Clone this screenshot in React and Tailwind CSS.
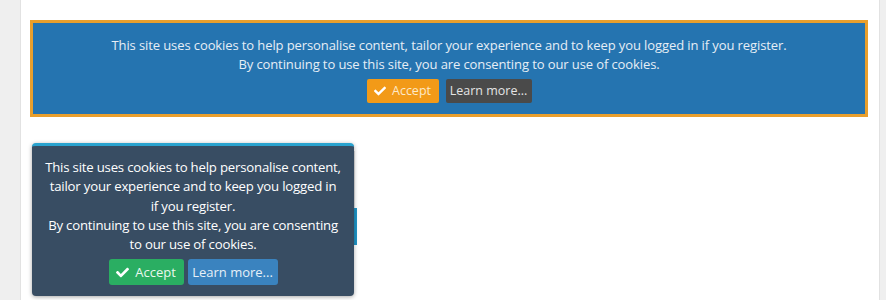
import React from "react";
import { FaCheck } from "react-icons/fa";

export default function App() {
  return (
    <div
      className="flex w-[886px] h-[300px] overflow-hidden bg-white"
      style={{ fontFamily: '"Open Sans", "Noto Sans", sans-serif' }}
    >
      <div className="w-[21px] shrink-0 bg-[#efefef] border-r border-[#e2e2e2]" />
      <div className="flex-1 relative pl-[9px] pt-[20px]">
        <div className="w-[838px] h-[97px] border-[3px] border-[#e99f2c] bg-[#2574b0] flex flex-col items-center pt-[13px]">
          <p className="text-[13px] leading-[19px] tracking-[-0.1px] text-[#e6eef6] text-center">
            This site uses cookies to help personalise content, tailor your experience and to keep you logged in if you register.
            <br />
            By continuing to use this site, you are consenting to our use of cookies.
          </p>
          <div className="flex gap-[7px] mt-[5px]">
            <button className="h-[24px] w-[72px] bg-[#f29a18] rounded-[2px] flex items-center justify-center gap-[6px] text-[12.5px] text-[#fde9c8]">
              <FaCheck className="w-[12px] h-[12px] text-white" />
              Accept
            </button>
            <button className="h-[24px] w-[86px] bg-[#4a4a4a] rounded-[2px] flex items-center justify-center text-[12.5px] text-[#e4e4e4]">
              Learn more...
            </button>
          </div>
        </div>

        <div className="relative mt-[26px] ml-[2px] w-[322px]">
          <div className="absolute left-[322px] top-[8px] w-[1px] h-[58px] bg-[#e0e0e0]" />
          <div className="absolute left-[322px] top-[65px] w-[3px] h-[37px] bg-[#1f94c6]" />
          <div className="relative w-[322px] h-[153px] bg-[#384d63] border-t-[3px] border-[#2aa3cf] rounded-[4px] shadow-[0_1px_4px_rgba(0,0,0,0.35)] flex flex-col items-center pt-[12px]">
            <p className="text-[13.2px] leading-[19.3px] tracking-[-0.2px] text-white text-center px-[4px]">
              This site uses cookies to help personalise content, tailor your experience and to keep you logged in
              <br />
              if you register.
              <br />
              By continuing to use this site, you are consenting
              <br />
              to our use of cookies.
            </p>
            <div className="flex gap-[4px] mt-[5px]">
              <button className="h-[26px] w-[75px] bg-[#2aae62] rounded-[3px] flex items-center justify-center gap-[6px] text-[13px] text-[#e9f8ee]">
                <FaCheck className="w-[13px] h-[13px] text-white" />
                Accept
              </button>
              <button className="h-[26px] w-[90px] bg-[#3a83bf] rounded-[3px] flex items-center justify-center text-[13px] text-[#e6f0f8]">
                Learn more...
              </button>
            </div>
          </div>
        </div>
      </div>
      <div className="w-[7px] shrink-0 bg-[#efefef] border-l border-[#e2e2e2]" />
    </div>
  );
}
